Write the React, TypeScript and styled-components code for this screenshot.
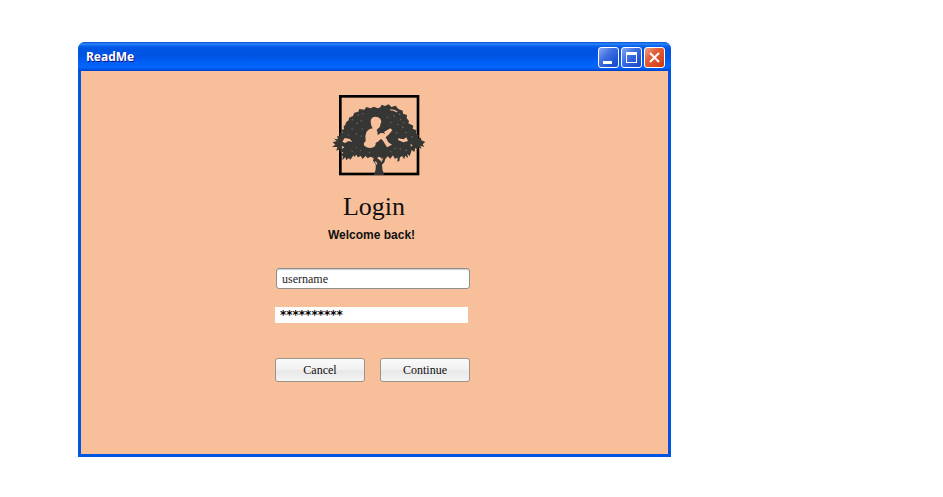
import React, { useState } from "react";
import styled, { createGlobalStyle } from "styled-components";

const GlobalStyle = createGlobalStyle`
  * { box-sizing: border-box; }
  body { margin: 0; background: #fff; font-family: "Liberation Serif", serif; color: #111; }
`;

const Desktop = styled.main`
  padding: 42px 272px 40px 78px;
`;

const Window = styled.section`
  min-width: 320px;
  background: #0054e3;
  border-radius: 7px 7px 0 0;
  padding: 0 3px 3px;
  overflow: hidden;
`;

const TitleBar = styled.header`
  display: flex;
  align-items: center;
  justify-content: space-between;
  height: 29px;
  margin: 0 -3px;
  padding: 2px 6px 0 8px;
  background: linear-gradient(
    to bottom,
    #0a4fd0 0,
    #2a86fb 2px,
    #0a62ee 4px,
    #0054e3 7px,
    #0054e3 14px,
    #005df5 19px,
    #0066ff 25px,
    #0058ec 27px,
    #003fc4 29px
  );
`;

const Title = styled.h1`
  margin: 0;
  padding-bottom: 2px;
  font: 700 12px/16px "Noto Sans", sans-serif;
  color: #fff;
  text-shadow: 1px 1px #0f1089;
`;

const Controls = styled.div`
  display: flex;
  gap: 2px;
`;

const ControlButton = styled.button<{ $close?: boolean }>`
  display: block;
  width: 21px;
  height: 21px;
  padding: 0;
  border: 1px solid #fff;
  border-radius: 3px;
  background: ${(p) =>
    p.$close
      ? "linear-gradient(135deg, #f0a08a 0%, #e4603c 35%, #dc4a20 70%, #c83c10 100%)"
      : "linear-gradient(135deg, #86a6f0 0%, #3f6fe2 40%, #2458d4 70%, #1c4cc0 100%)"};

  svg { display: block; }
`;

const Content = styled.div`
  display: flex;
  flex-direction: column;
  align-items: center;
  padding: 17px 4px 72px 0;
  background: #f8c09a;
`;

const Logo = styled.svg`
  display: block;
  width: 120px;
  height: 95px;
`;

const Heading = styled.h2`
  margin: 9px 0 0;
  padding-left: 3px;
  font: 400 26px/30px "Liberation Serif", serif;
`;

const Welcome = styled.p`
  margin: 5px 0 0;
  padding-right: 2px;
  font: 700 12px/16px "Liberation Sans", sans-serif;
`;

const Form = styled.form`
  display: flex;
  flex-direction: column;
  width: 195px;
  margin-top: 25px;
`;

const UserField = styled.input`
  align-self: flex-end;
  width: 194px;
  height: 21px;
  padding: 1px 5px 0;
  border: 1px solid #8e8f8f;
  border-radius: 3px;
  background: #fff;
  box-shadow: inset 0 1px 1px #ccc;
  color: #222;
  font: 12px/16px "Liberation Serif", serif;
`;

const PasswordField = styled.input`
  width: 193px;
  height: 16px;
  margin-top: 18px;
  padding: 0 5px;
  border: 0;
  background: #fff;
  color: #000;
  font: 700 12px/16px "DejaVu Sans", sans-serif;
`;

const Actions = styled.div`
  display: flex;
  gap: 15px;
  margin-top: 35px;
`;

const ActionButton = styled.button`
  flex: 1;
  height: 24px;
  padding: 0;
  border: 1px solid #9c9488;
  border-radius: 3px;
  background: linear-gradient(to bottom, #fafafa 0%, #f2f2f2 45%, #e8e8e8 55%, #f4f4f4 100%);
  color: #111;
  font: 12px/16px "Liberation Serif", serif;
`;

function TreeLogo() {
  return (
    <Logo viewBox="-36 0 360 285" role="img" aria-label="Child reading in a tree">
      <rect x="46" y="25" width="233" height="233" fill="none" stroke="#000" strokeWidth="8" />
      <g fill="#363634">
        <path d="M60 112 L64 102 L71 97 L72 89 L84 84 L88 74 L100 71 L103 63 L118 65 L124 57 L136 61 L147 56 L158 61 L166 58 L170 50 L180 54 L191 49 L199 57 L212 53 L220 63 L233 68 L234 77 L246 81 L245 91 L252 99 L250 106 L265 113 L263 122 L274 127 L273 137 L282 142 L278 151 L288 149 L289 157 L301 162 L293 169 L298 176 L286 174 L290 182 L279 177 L282 186 L271 180 L268 192 L260 186 L257 196 L254 205 L247 197 L249 210 L240 203 L238 214 L231 204 L225 208 L223 219 L217 221 L218 209 L209 212 L204 202 L196 212 L188 205 L181 213 L178 223 L171 230 Q171 248 178 261 L146 261 Q154 247 152 229 L144 218 L146 210 L136 206 L128 211 L122 204 L112 213 L108 204 L98 208 L94 200 L87 208 L86 201 L76 215 L71 210 L64 217 L61 208 L51 217 L54 204 L46 203 L55 193 L43 190 L47 183 L34 188 L37 177 L21 177 L31 170 L23 163 L35 159 L27 152 L39 154 L36 145 L46 144 L43 134 L54 135 L47 126 L57 124 L56 115 Z" />
      </g>
      <g fill="#f8c09a">
        <path d="M137 101 Q137 88 150 86 Q165 86 168 97 Q171 103 166 109 Q166 119 158 122 L155 126 Q160 133 158 142 L167 135 Q176 134 181 139 L177 132 L196 121 L202 127 L192 139 L182 148 L190 163 L201 170 L186 178 L175 160 L168 152 Q162 160 152 165 Q153 174 145 178 Q134 182 124 177 Q114 173 117 165 L122 159 Q119 145 124 133 Q130 123 143 121 L139 113 Z" />
        <path d="M156 210 l6-4 8 4-3 9-6-5z M59 150 l16 3 7 9-11-3-11 6-8-4z M219 151 l17 3 8-6 5 11-14 4-15-6z M50 174 l8 3-6 6z M256 169 l7 2-5 5z" />
        <path d="M153 220l4 7-2 4-6-10z M175 211l-4 9-3 3 1-10z M196 64l14 2 9 6-4 1-10-5-10-1z" />
      </g>
      <g fill="#f8c09a" opacity="0.45">
        <path d="M80 93l5 2-4 3z M96 82l4-3 2 4z M111 75l5 2-3 3z M105 99l5-2 1 4z M93 107l3-4 3 5z M79 121l5 1-3 4z M110 120l4 2-3 3z M91 138l5-2-1 5z M68 139l4 1-2 4z M106 145l3-3 3 4z M204 82l7 1-3 3z M223 76l4 5-6-1z M225 92l4 2-3 4z M184 88l4-2 2 4z M195 101l5 2-4 3z M215 110l4-3 2 4z M232 115l5 3-6 2z M211 134l6-2-2 5z M242 131l5 4-5 1z M260 144l4 3-6 2z M93 176l4 2-3 3z M79 188l5 1-3 4z M104 188l4-2 1 4z M207 182l4-2 2 4z M224 180l5 3-5 2z M240 188l3-4 3 5z M195 192l3-3 2 4z M131 191l5 2-4 3z M236 102l3 3-4 1z" />
      </g>
    </Logo>
  );
}

export default function App() {
  const [username, setUsername] = useState("username");
  const [password, setPassword] = useState("**********");

  return (
    <>
      <GlobalStyle />
      <Desktop>
        <Window>
          <TitleBar>
            <Title>ReadMe</Title>
            <Controls>
              <ControlButton type="button" aria-label="Minimize">
                <svg width="19" height="19" aria-hidden="true">
                  <rect x="4" y="13" width="9" height="3" fill="#fff" />
                </svg>
              </ControlButton>
              <ControlButton type="button" aria-label="Maximize">
                <svg width="19" height="19" aria-hidden="true">
                  <path d="M4 4H15V15H4Z M5 7V14H14V7Z" fill="#fff" fillRule="evenodd" />
                </svg>
              </ControlButton>
              <ControlButton type="button" aria-label="Close" $close>
                <svg width="19" height="19" aria-hidden="true">
                  <path d="M5 5L14 14M14 5L5 14" stroke="#fff" strokeWidth="2" />
                </svg>
              </ControlButton>
            </Controls>
          </TitleBar>
          <Content>
            <TreeLogo />
            <Heading>Login</Heading>
            <Welcome>Welcome back!</Welcome>
            <Form onSubmit={(e) => e.preventDefault()}>
              <UserField
                aria-label="Username"
                value={username}
                onChange={(e) => setUsername(e.target.value)}
              />
              <PasswordField
                aria-label="Password"
                value={password}
                onChange={(e) => setPassword(e.target.value)}
              />
              <Actions>
                <ActionButton type="button">Cancel</ActionButton>
                <ActionButton type="submit">Continue</ActionButton>
              </Actions>
            </Form>
          </Content>
        </Window>
      </Desktop>
    </>
  );
}
